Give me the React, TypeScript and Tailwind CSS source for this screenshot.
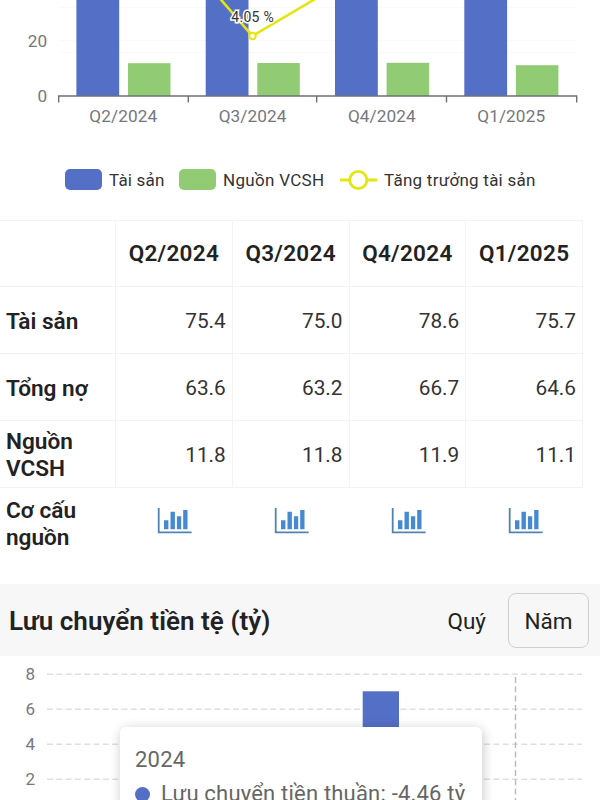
import React from 'react';

const quarters = ['Q2/2024', 'Q3/2024', 'Q4/2024', 'Q1/2025'];

const rows = [
  { label: 'Tài sản', values: ['75.4', '75.0', '78.6', '75.7'] },
  { label: 'Tổng nợ', values: ['63.6', '63.2', '66.7', '64.6'] },
  { label: 'Nguồn VCSH', values: ['11.8', '11.8', '11.9', '11.1'] },
];

// top edge of each equity bar, in chart pixels
const equityTops = [63.2, 63, 62.8, 65.2];

function BalanceChart() {
  return (
    <svg width="600" height="140" viewBox="0 0 600 140" className="block" fontFamily="Roboto, sans-serif">
      <g stroke="#fafafb">
        <line x1="59" x2="577" y1="7.5" y2="7.5" />
        <line x1="59" x2="577" y1="40.5" y2="40.5" />
        <line x1="59" x2="577" y1="52.5" y2="52.5" />
      </g>
      {quarters.map((q, i) => (
        <g key={q}>
          <rect x={76.4 + i * 129.3} y="-5" width="42.8" height="101" fill="#5470c6" />
          <rect x={128 + i * 129.3} y={equityTops[i]} width="42.5" height={96 - equityTops[i]} fill="#91cc75" />
          <text x={123.3 + i * 129.3} y="121.6" fontSize="17.2" letterSpacing="0.1" textAnchor="middle" fill="#75777d">
            {q}
          </text>
        </g>
      ))}
      <path
        d="M58.7 102.5V96H576.7V102.5M188.3 96v6.5M316.7 96v6.5M446.5 96v6.5"
        fill="none"
        stroke="#6e7079"
        strokeWidth="1.4"
      />
      <path d="M216 -6L252.5 36L316 -1.5" fill="none" stroke="#e5e510" strokeWidth="2.6" />
      <circle cx="252.5" cy="36" r="3.2" fill="#fff" stroke="#e5e510" strokeWidth="2" />
      <text
        x="252.7"
        y="21.6"
        fontSize="14"
        textAnchor="middle"
        fill="#333"
        stroke="#fff"
        strokeWidth="3"
        paintOrder="stroke"
        letterSpacing="0.3"
      >
        4.05 %
      </text>
      <g fontSize="17.2" textAnchor="end" fill="#75777d" letterSpacing="0.1">
        <text x="47.2" y="46.6">20</text>
        <text x="47.2" y="101.7">0</text>
      </g>
    </svg>
  );
}

function Legend() {
  return (
    <div className="flex h-[79px] items-center pl-[65px] text-[17px] leading-[20px] text-[#333]">
      <span className="h-[21px] w-[37px] rounded-[5px] bg-[#5470c6]" />
      <span className="ml-[7px] w-[70px] whitespace-nowrap tracking-[0.2px]">Tài sản</span>
      <span className="h-[21px] w-[37px] rounded-[5px] bg-[#91cc75]" />
      <span className="ml-[7px] w-[117px] whitespace-nowrap tracking-[0.3px]">Nguồn VCSH</span>
      <svg width="37" height="22" viewBox="0 0 37 22">
        <path d="M0 11H37" stroke="#e5e510" strokeWidth="3" />
        <circle cx="18.3" cy="11" r="8.6" fill="#fff" stroke="#e5e510" strokeWidth="2.8" />
      </svg>
      <span className="ml-[7px] whitespace-nowrap tracking-[0.25px]">Tăng trưởng tài sản</span>
    </div>
  );
}

function ChartIcon() {
  return (
    <svg width="36" height="28" viewBox="0 0 36 28" className="mx-auto block">
      <path d="M2.7 0V24.4H35.6" fill="none" stroke="#4f83b5" strokeWidth="1.8" />
      <path d="M8 12.2h4.4v9H8zM14.5 3.8h4.4v17.4h-4.4zM20.9 8.2h4.3v13h-4.3zM27.2 2h4.3v19.2h-4.3z" fill="#4489d2" />
    </svg>
  );
}

function BalanceTable() {
  return (
    <table className="w-[583px] table-fixed border-separate border-spacing-0 text-[#222]">
      <colgroup>
        <col className="w-[116px]" />
        <col />
        <col />
        <col />
        <col />
      </colgroup>
      <thead>
        <tr className="h-[67px]">
          <th className="border-y border-r border-[#f3f3f3] p-0" />
          {quarters.map((q) => (
            <th key={q} className="border-y border-r border-[#f3f3f3] p-0 pt-[2px] text-[22.5px] font-semibold tracking-[0.3px]">
              {q}
            </th>
          ))}
        </tr>
      </thead>
      <tbody>
        {rows.map((row) => (
          <tr key={row.label} className="h-[67px]">
            <th className="border-r border-b border-[#f3f3f3] p-0 pt-[3px] pr-4 pl-[6px] text-left text-[22.6px] leading-[27px] font-semibold last-of-type:align-middle">
              {row.label}
            </th>
            {row.values.map((value, i) => (
              <td key={i} className="border-r border-b border-[#f3f3f3] p-0 pt-1 pr-[6px] text-right text-[20.8px] text-[#333]">
                {value}
              </td>
            ))}
          </tr>
        ))}
        <tr className="h-[72px]">
          <th className="p-0 pt-px pr-4 pl-[6px] text-left text-[22.6px] leading-[27px] font-semibold">Cơ cấu nguồn</th>
          {quarters.map((q) => (
            <td key={q} className="p-0 pb-1">
              <ChartIcon />
            </td>
          ))}
        </tr>
      </tbody>
    </table>
  );
}

function CashFlowChart() {
  return (
    <div className="relative h-[144px] overflow-hidden">
      <svg width="600" height="144" viewBox="0 0 600 144" className="block" fontFamily="Roboto, sans-serif">
        {[8, 6, 4, 2].map((tick, i) => (
          <g key={tick}>
            <line x1="47" x2="582" y1={18.3 + i * 35} y2={18.3 + i * 35} stroke="#dfdfe1" strokeWidth="1.4" strokeDasharray="6 3.3" />
            <text x="35" y={24 + i * 35} fontSize="17" textAnchor="end" fill="#77797e">
              {tick}
            </text>
          </g>
        ))}
        <line x1="515.5" x2="515.5" y1="21" y2="144" stroke="#b9b9bd" strokeWidth="1.4" strokeDasharray="6 3.3" />
        <rect x="362.7" y="35.3" width="36.3" height="60" fill="#5470c6" />
      </svg>
      <div className="absolute top-[71px] left-[120px] h-[120px] w-[362px] rounded-[6px] bg-white px-[15px] pt-[20px] text-[22px] leading-[26px] text-[#666] shadow-[1px_2px_12px_rgba(0,0,0,0.22)]">
        <div className="tracking-[0.2px]">2024</div>
        <div className="mt-[8px] flex items-center tracking-[0.2px] whitespace-nowrap">
          <span className="mr-[11px] size-[15px] rounded-full bg-[#5470c6]" />
          Lưu chuyển tiền thuần: -4.46 tỷ
        </div>
      </div>
    </div>
  );
}

export default function App() {
  return (
    <main className="h-[800px] w-[600px] overflow-hidden bg-white font-['Roboto',sans-serif]">
      <BalanceChart />
      <Legend />
      <div className="h-[365px] pt-[0.5px]">
        <BalanceTable />
      </div>
      <div className="flex h-[72px] items-center bg-[#f7f7f7] pr-[11px] pl-[9px] text-[#222]">
        <h2 className="flex-1 pt-[2px] text-[26px] font-semibold tracking-[0.05px] whitespace-nowrap">Lưu chuyển tiền tệ (tỷ)</h2>
        <button className="mr-[22px] pt-[3px] text-[22.5px]">Quý</button>
        <button className="h-[55px] w-[81px] rounded-[8px] border-[1.5px] border-[#d0d0d0] pt-[3px] text-[22.5px]">Năm</button>
      </div>
      <CashFlowChart />
    </main>
  );
}
